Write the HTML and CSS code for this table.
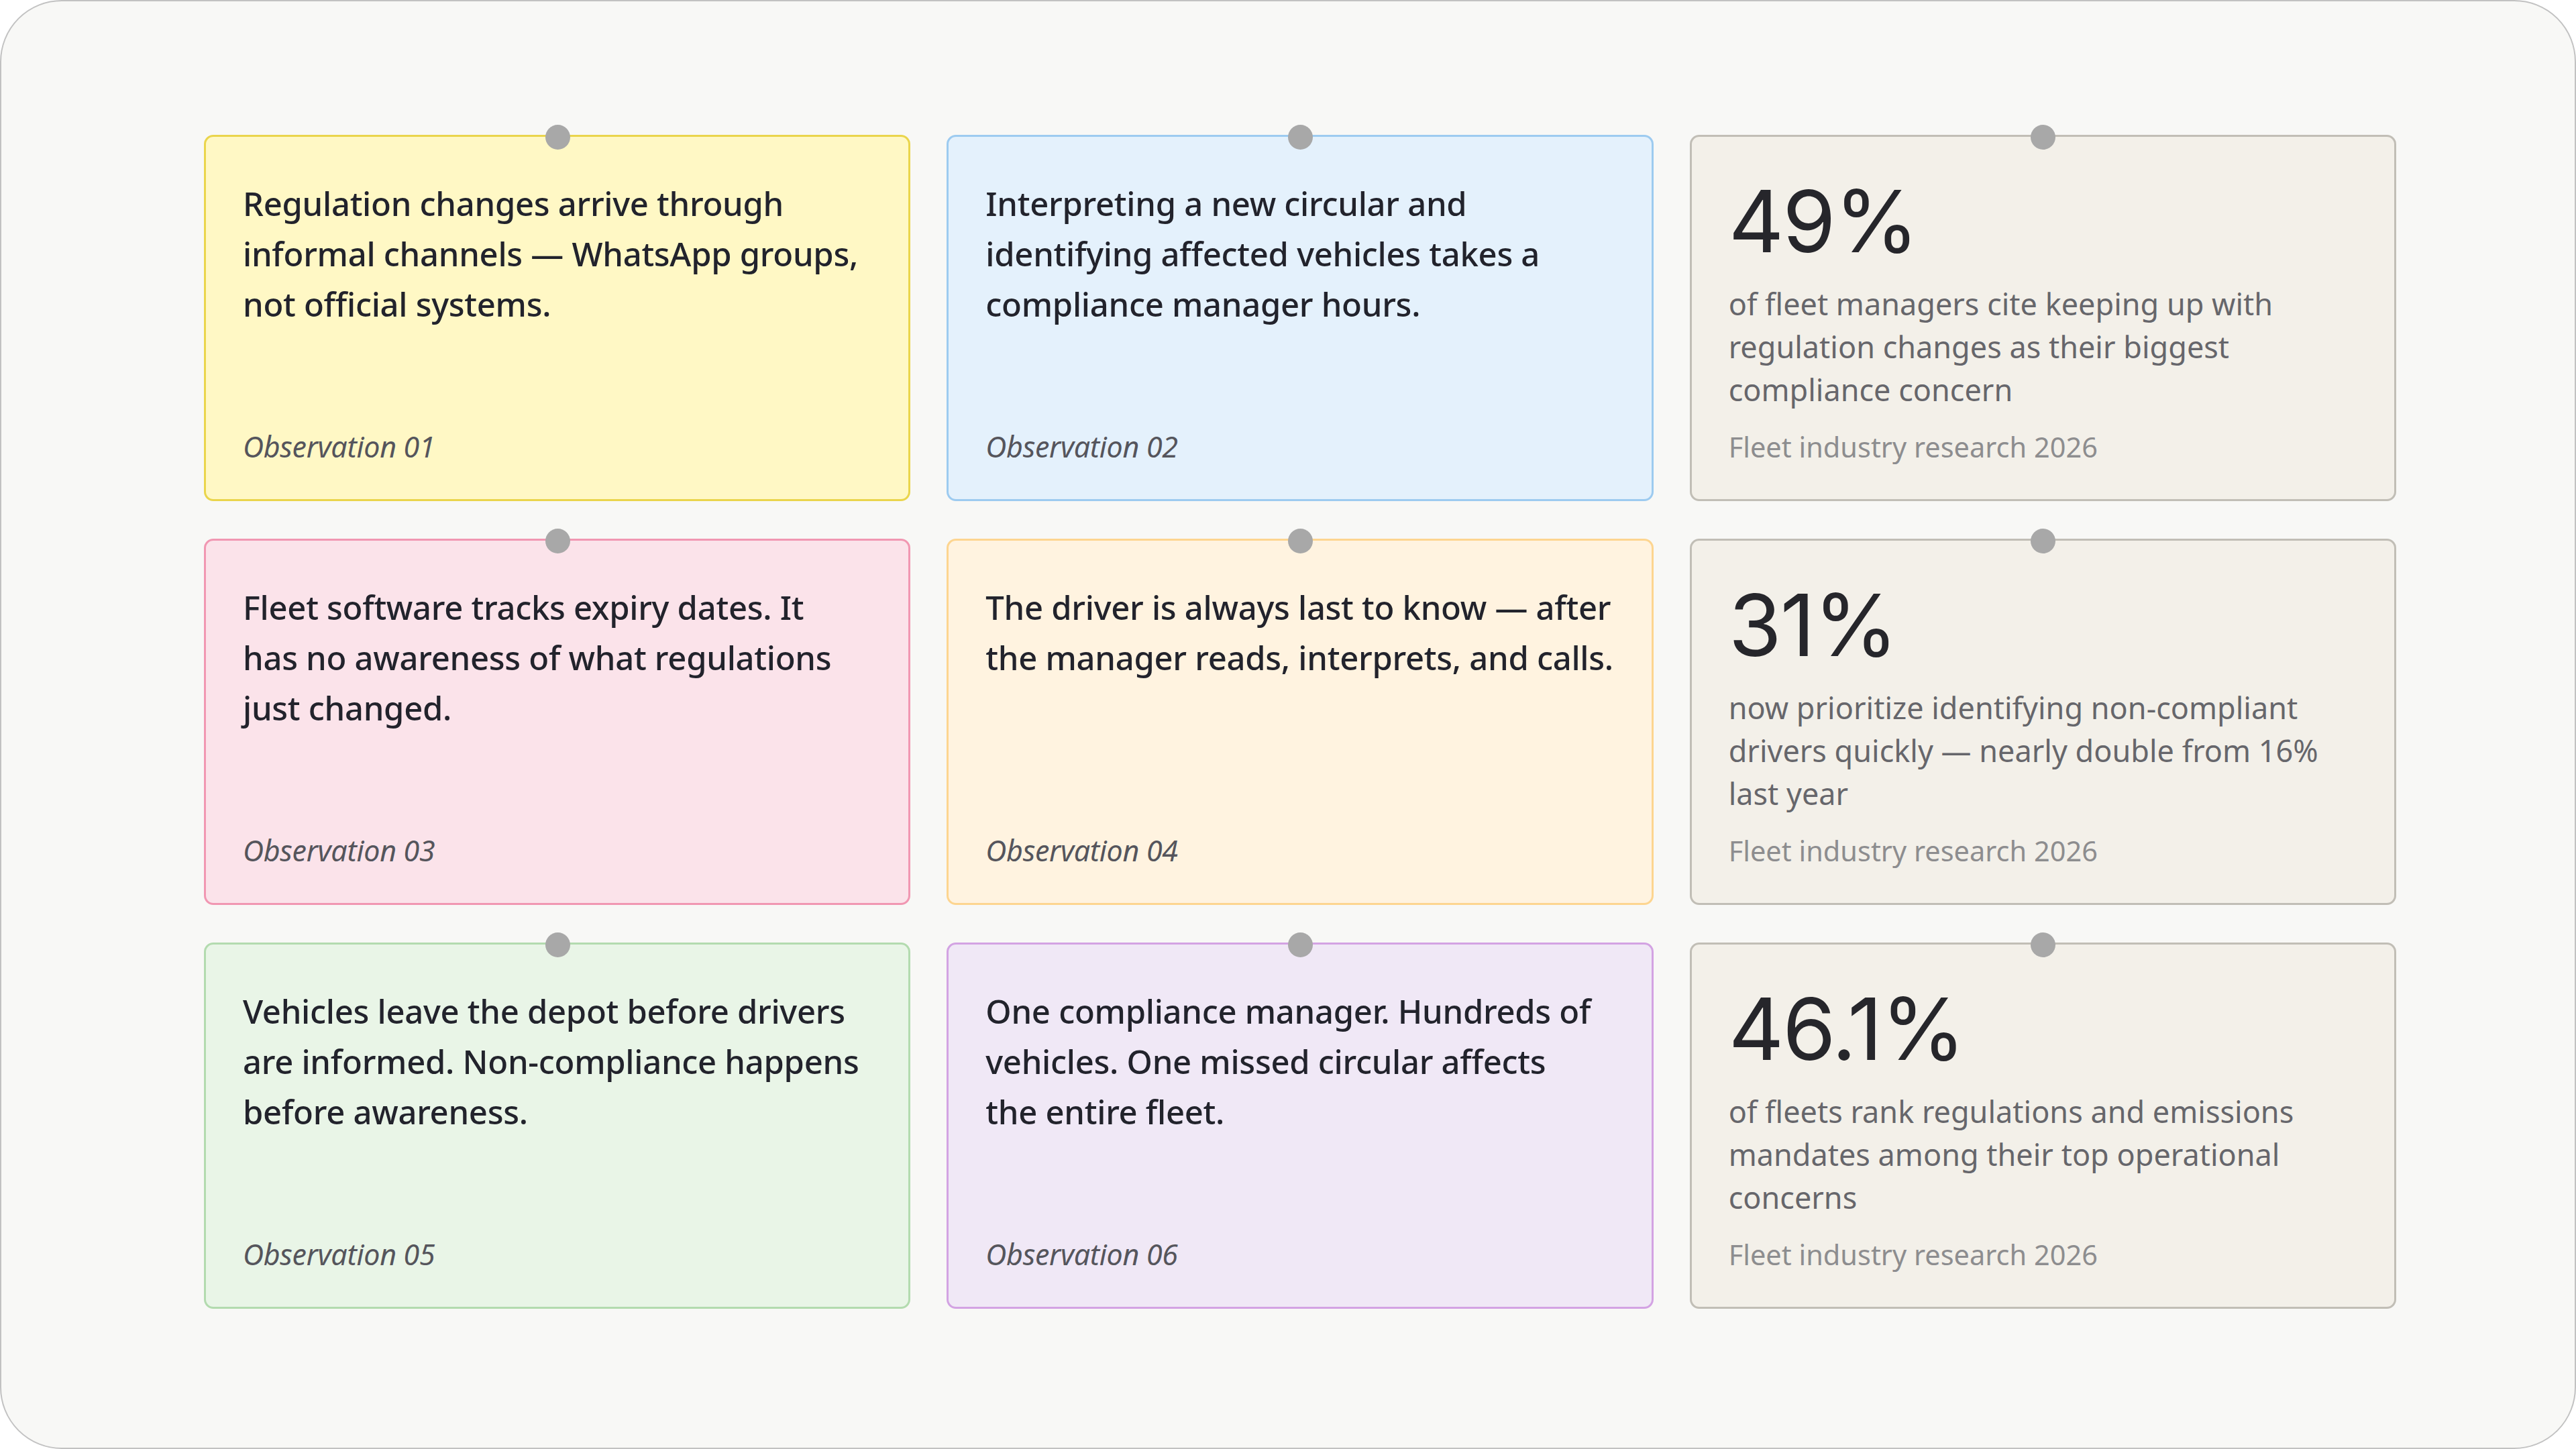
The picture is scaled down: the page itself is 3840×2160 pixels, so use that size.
FILE: index.html
```html
<!DOCTYPE html>
<html lang="en">
<head>
<meta charset="utf-8">
<title>Fleet compliance observations</title>
<link rel="stylesheet" href="styles.css">
</head>
<body>
<div class="frame">
  <div class="board">
    <div class="card note yellow">
      <span class="pin"></span>
      <p class="note-text">Regulation changes arrive through<br>informal channels — WhatsApp groups,<br>not official systems.</p>
      <p class="note-label">Observation 01</p>
    </div>
    <div class="card note blue">
      <span class="pin"></span>
      <p class="note-text">Interpreting a new circular and<br>identifying affected vehicles takes a<br>compliance manager hours.</p>
      <p class="note-label">Observation 02</p>
    </div>
    <div class="card stat">
      <span class="pin"></span>
      <p class="stat-num">49%</p>
      <p class="stat-desc">of fleet managers cite keeping up with<br>regulation changes as their biggest<br>compliance concern</p>
      <p class="stat-src">Fleet industry research 2026</p>
    </div>

    <div class="card note pink">
      <span class="pin"></span>
      <p class="note-text">Fleet software tracks expiry dates. It<br>has no awareness of what regulations<br>just changed.</p>
      <p class="note-label">Observation 03</p>
    </div>
    <div class="card note orange">
      <span class="pin"></span>
      <p class="note-text">The driver is always last to know — after<br>the manager reads, interprets, and calls.</p>
      <p class="note-label">Observation 04</p>
    </div>
    <div class="card stat">
      <span class="pin"></span>
      <p class="stat-num">31%</p>
      <p class="stat-desc">now prioritize identifying non-compliant<br>drivers quickly — nearly double from 16%<br>last year</p>
      <p class="stat-src">Fleet industry research 2026</p>
    </div>

    <div class="card note green">
      <span class="pin"></span>
      <p class="note-text">Vehicles leave the depot before drivers<br>are informed. Non-compliance happens<br>before awareness.</p>
      <p class="note-label">Observation 05</p>
    </div>
    <div class="card note purple">
      <span class="pin"></span>
      <p class="note-text">One compliance manager. Hundreds of<br>vehicles. One missed circular affects<br>the entire fleet.</p>
      <p class="note-label">Observation 06</p>
    </div>
    <div class="card stat">
      <span class="pin"></span>
      <p class="stat-num">46.1%</p>
      <p class="stat-desc">of fleets rank regulations and emissions<br>mandates among their top operational<br>concerns</p>
      <p class="stat-src">Fleet industry research 2026</p>
    </div>
  </div>
</div>
</body>
</html>
```

FILE: styles.css
```css
* { box-sizing: border-box; }
html, body { margin: 0; padding: 0; background: #ffffff; }
body {
  font-family: "Noto Sans", "Open Sans", sans-serif;
  color: #22232c;
}
p { margin: 0; }

.frame {
  width: 3840px;
  height: 2160px;
  background: #f8f8f6;
  border: 2px solid #c2c2c2;
  border-radius: 92px;
  padding: 199px 266px 0 302px;
}

.board {
  display: grid;
  grid-template-columns: repeat(3, 1fr);
  grid-auto-rows: 546px;
  column-gap: 54px;
  row-gap: 56px;
}

.card {
  position: relative;
  display: flex;
  flex-direction: column;
  border: 3px solid;
  border-radius: 14px;
  padding: 62px 30px 50px 55px;
}

.pin {
  position: absolute;
  top: -18px;
  left: 50%;
  width: 37px;
  height: 37px;
  margin-left: -18px;
  border-radius: 50%;
  background: #a8a8a8;
}

.note-text {
  font-size: 49px;
  line-height: 75px;
  font-weight: 500;
  letter-spacing: -0.3px;
  white-space: nowrap;
  color: #22232c;
}
.note-label {
  margin-top: auto;
  font-size: 43px;
  line-height: 56px;
  font-style: italic;
  letter-spacing: -0.3px;
  color: #55555c;
}

.stat-num {
  font-family: "Inter", "Noto Sans", sans-serif;
  font-size: 128px;
  line-height: 1;
  font-weight: 400;
  letter-spacing: -2px;
  color: #26262b;
}
.stat-desc {
  margin-top: 27px;
  font-size: 45px;
  line-height: 64px;
  white-space: nowrap;
  color: #66666b;
}
.stat-src {
  margin-top: auto;
  font-size: 41.5px;
  line-height: 56px;
  color: #8d8d8f;
}

.yellow { background: #fff8c5; border-color: #ead54c; }
.blue   { background: #e4f1fc; border-color: #9dcbf0; }
.pink   { background: #fbe3ea; border-color: #f197b2; }
.orange { background: #fff3e0; border-color: #fdd590; }
.green  { background: #e9f5e7; border-color: #b3dbaf; }
.purple { background: #f0e8f6; border-color: #d3a3e3; }
.stat   { background: #f3f0e9; border-color: #c1beb6; }
```
